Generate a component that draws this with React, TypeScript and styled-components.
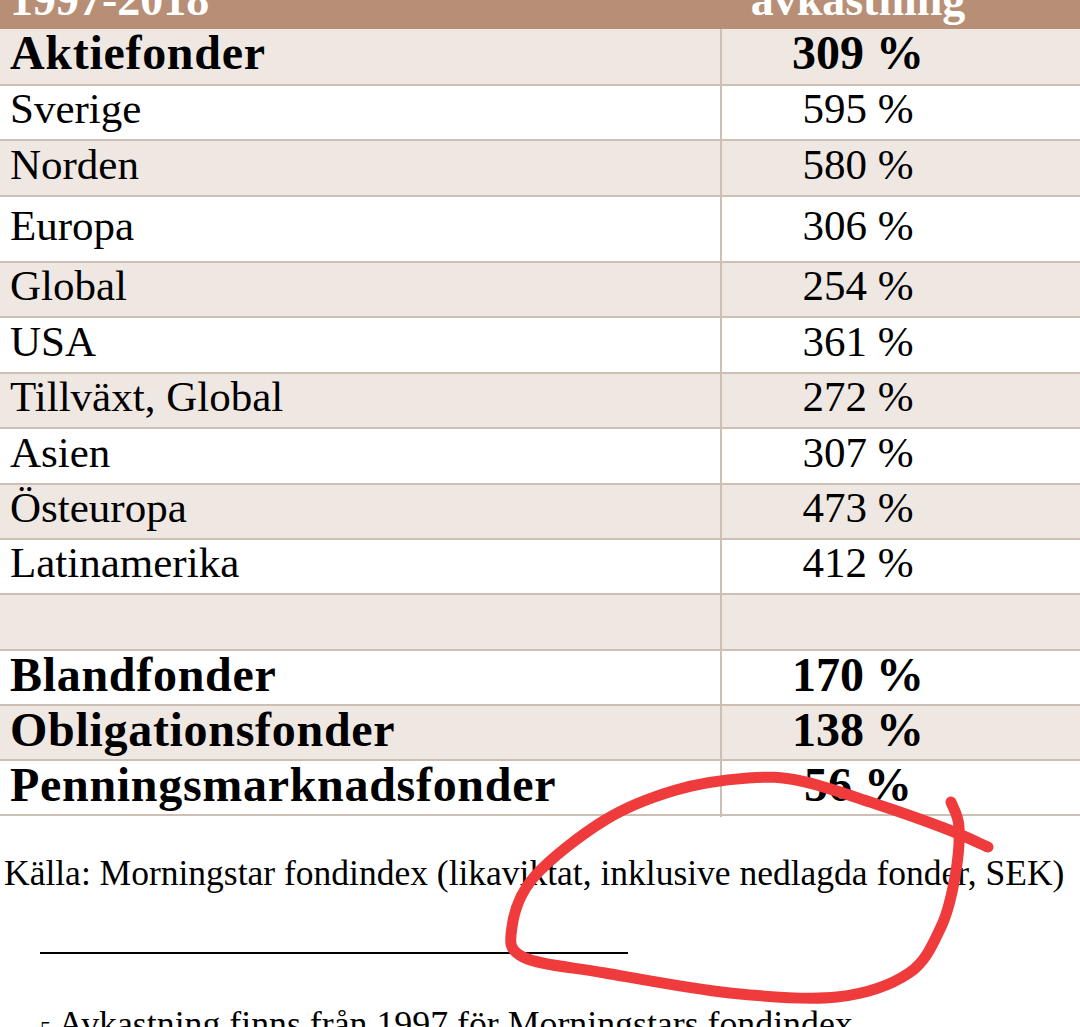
import React from 'react';
import styled, { createGlobalStyle } from 'styled-components';

const GlobalStyle = createGlobalStyle`
  html, body { margin: 0; padding: 0; background: #ffffff; }
  body {
    width: 1080px;
    height: 1027px;
    overflow: hidden;
    font-family: "Liberation Serif", "Times New Roman", serif;
    color: #000;
  }
`;

const Page = styled.div`
  position: relative;
  width: 1080px;
  height: 1027px;
  overflow: hidden;
`;

const Table = styled.div`
  display: flex;
  flex-direction: column;
  margin-top: -31px;
`;

const HeaderRow = styled.div`
  display: grid;
  grid-template-columns: 722px 1fr;
  height: 60px;
  background: #b78f76;
  color: #ffffff;
  font-weight: bold;
  font-size: 46px;
  line-height: 1;
`;

const HeaderLabel = styled.div`
  padding: 8px 0 0 10px;
`;

const HeaderValue = styled.div`
  padding: 8px 86px 0 0;
  text-align: center;
`;

const Row = styled.div<{ $h: number; $shade: boolean }>`
  display: grid;
  grid-template-columns: 722px 1fr;
  box-sizing: border-box;
  height: ${(p) => p.$h}px;
  background: ${(p) => (p.$shade ? '#efe7e2' : '#ffffff')};
  border-bottom: 2px solid #cdbfb3;
  line-height: 1;
`;

const Label = styled.div<{ $bold: boolean }>`
  display: flex;
  align-items: center;
  box-sizing: border-box;
  padding: 0 0 8px 10px;
  border-right: 2px solid #cdbfb3;
  font-size: ${(p) => (p.$bold ? 48 : 43)}px;
  font-weight: ${(p) => (p.$bold ? 'bold' : 'normal')};
  letter-spacing: ${(p) => (p.$bold ? '0.7px' : '0')};
  white-space: nowrap;
`;

const Value = styled.div<{ $bold: boolean }>`
  display: flex;
  align-items: center;
  justify-content: center;
  padding: 0 86px 8px 0;
  font-size: ${(p) => (p.$bold ? 48 : 43)}px;
  font-weight: ${(p) => (p.$bold ? 'bold' : 'normal')};
  white-space: nowrap;
`;

const Source = styled.p`
  margin: 40px 0 0 0;
  padding-left: 4px;
  font-size: 35.5px;
  line-height: 1;
  white-space: nowrap;
`;

const FootRule = styled.div`
  margin: 60px 0 0 40px;
  width: 588px;
  height: 2px;
  background: #000;
`;

const Footnote = styled.p`
  margin: 53px 0 0 40px;
  font-size: 35.8px;
  line-height: 1;
  white-space: nowrap;
`;

const FootNum = styled.span`
  font-size: 22px;
`;

const Overlay = styled.svg`
  position: absolute;
  left: 0;
  top: 0;
  pointer-events: none;
`;

type RowData = { label: string; value: string; bold?: boolean; h: number };

const rows: RowData[] = [
  { label: 'Aktiefonder', value: '309 %', bold: true, h: 57 },
  { label: 'Sverige', value: '595 %', h: 55 },
  { label: 'Norden', value: '580 %', h: 56 },
  { label: 'Europa', value: '306 %', h: 66 },
  { label: 'Global', value: '254 %', h: 55 },
  { label: 'USA', value: '361 %', h: 56 },
  { label: 'Tillväxt, Global', value: '272 %', h: 55 },
  { label: 'Asien', value: '307 %', h: 56 },
  { label: 'Östeuropa', value: '473 %', h: 55 },
  { label: 'Latinamerika', value: '412 %', h: 55 },
  { label: '', value: '', h: 56 },
  { label: 'Blandfonder', value: '170 %', bold: true, h: 55 },
  { label: 'Obligationsfonder', value: '138 %', bold: true, h: 55 },
  { label: 'Penningsmarknadsfonder', value: '56 %', bold: true, h: 55 },
];

const loopPoints: [number, number][] = [
  [951, 802], [959, 827], [955, 877], [941, 927], [909, 973], [837, 997],
  [730, 993], [605, 973], [523, 957], [512, 927], [534, 877], [605, 820],
  [676, 790], [748, 778], [801, 781], [873, 803], [944, 828], [988, 847],
];

function smoothPath(pts: [number, number][]): string {
  let d = `M ${pts[0][0]} ${pts[0][1]}`;
  for (let i = 0; i < pts.length - 1; i++) {
    const p0 = pts[i - 1] || pts[i];
    const p1 = pts[i];
    const p2 = pts[i + 1];
    const p3 = pts[i + 2] || p2;
    const c1x = p1[0] + (p2[0] - p0[0]) / 6;
    const c1y = p1[1] + (p2[1] - p0[1]) / 6;
    const c2x = p2[0] - (p3[0] - p1[0]) / 6;
    const c2y = p2[1] - (p3[1] - p1[1]) / 6;
    d += ` C ${c1x.toFixed(1)} ${c1y.toFixed(1)}, ${c2x.toFixed(1)} ${c2y.toFixed(1)}, ${p2[0]} ${p2[1]}`;
  }
  return d;
}

export default function App() {
  return (
    <Page>
      <GlobalStyle />
      <Table>
        <HeaderRow>
          <HeaderLabel>1997-2018</HeaderLabel>
          <HeaderValue>avkastning</HeaderValue>
        </HeaderRow>
        {rows.map((r, i) => (
          <Row key={i} $h={r.h} $shade={i % 2 === 0}>
            <Label $bold={!!r.bold}>{r.label}</Label>
            <Value $bold={!!r.bold}>{r.value}</Value>
          </Row>
        ))}
      </Table>
      <Source>Källa: Morningstar fondindex (likaviktat, inklusive nedlagda fonder, SEK)</Source>
      <FootRule />
      <Footnote>
        <FootNum>5</FootNum> Avkastning finns från 1997 för Morningstars fondindex
      </Footnote>
      <Overlay width={1080} height={1027} viewBox="0 0 1080 1027">
        <path
          d={smoothPath(loopPoints)}
          fill="none"
          stroke="#ef3b3c"
          strokeWidth={11}
          strokeLinecap="round"
          strokeLinejoin="round"
        />
      </Overlay>
    </Page>
  );
}
